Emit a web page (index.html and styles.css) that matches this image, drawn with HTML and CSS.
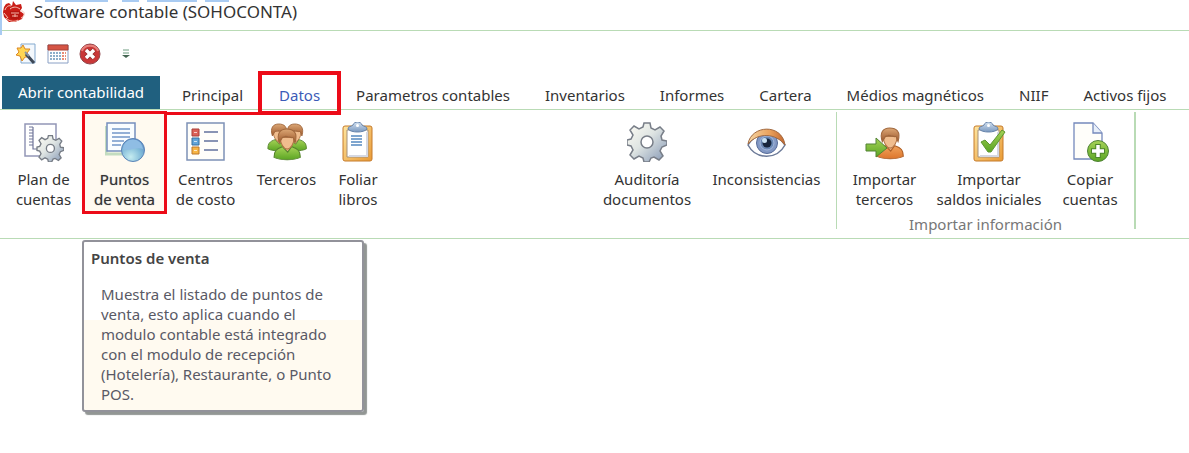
FILE: index.html
```html
<!DOCTYPE html>
<html lang="es">
<head>
  <meta charset="UTF-8">
  <meta name="viewport" content="width=device-width, initial-scale=1.0">
  <title>Software contable (SOHOCONTA)</title>
  <link rel="stylesheet" href="styles.css">
</head>
<body>

  <!-- degradados y formas compartidas por los iconos -->
  <svg class="defs" width="0" height="0" aria-hidden="true">
    <defs>
      <linearGradient id="metal" x1="0" y1="0" x2="1" y2="1">
        <stop offset="0" stop-color="#fffdf5"/><stop offset=".45" stop-color="#dfe5e3"/><stop offset="1" stop-color="#8295b3"/>
      </linearGradient>
      <linearGradient id="gold" x1="0" y1="0" x2="1" y2="1">
        <stop offset="0" stop-color="#ffe6a0"/><stop offset="1" stop-color="#e99a35"/>
      </linearGradient>
      <linearGradient id="green" x1="0" y1="0" x2="0" y2="1">
        <stop offset="0" stop-color="#a5d256"/><stop offset="1" stop-color="#5ba523"/>
      </linearGradient>
      <linearGradient id="orange" x1="0" y1="0" x2="0" y2="1">
        <stop offset="0" stop-color="#f0a35c"/><stop offset="1" stop-color="#dd762c"/>
      </linearGradient>
      <linearGradient id="hair" x1="0" y1="0" x2="0" y2="1">
        <stop offset="0" stop-color="#dca775"/><stop offset="1" stop-color="#9c562a"/>
      </linearGradient>
      <linearGradient id="clip" x1="0" y1="0" x2="0" y2="1">
        <stop offset="0" stop-color="#d4e2f1"/><stop offset="1" stop-color="#7998bf"/>
      </linearGradient>
      <linearGradient id="lid" x1="0" y1="0" x2="1" y2="0">
        <stop offset="0" stop-color="#f6d6a4"/><stop offset=".6" stop-color="#e9a05b"/><stop offset="1" stop-color="#c4672f"/>
      </linearGradient>
      <radialGradient id="ball" cx=".4" cy=".8" r=".8">
        <stop offset="0" stop-color="#c5ecf0"/><stop offset=".6" stop-color="#7fb9d8"/><stop offset="1" stop-color="#5f8fc6"/>
      </radialGradient>
      <path id="gear" d="M17 1h6l1 5 4 2 5-3 4 4-3 5 1 4 5 1v4l-5 2-2 4 3 5-4 4-5-3-3 1-2 4h-5l-1-4-4-2-5 3-4-4 3-5-2-4-4-1v-5l4-1 2-4-3-5 4-4 5 3 4-2zM20 14a6 6 0 1 0 0 12 6 6 0 0 0 0-12z"/>
      <g id="board">
        <rect x="5" y="4" width="29" height="35" rx="2" fill="url(#gold)" stroke="#c57a2b"/>
        <path d="M9 8h21v27H9z" fill="#fff" stroke="#a3917c"/>
        <path d="M29 10v24H11" fill="none" stroke="#d5d8e2" stroke-width="2"/>
        <path d="M10 7c0-3 3-2 5-4 1-4 8-4 9 0 2 2 5 1 5 4-3 4-16 4-19 0z" fill="url(#clip)" stroke="#6683aa"/>
        <circle cx="19.500" cy="3.500" r="1.500" fill="#fff"/>
      </g>
      <g id="person">
        <path d="M1 27c0-6 2-8 8-10h9c6 2 8 4 8 10-6 3-19 3-25 0z"/>
        <path d="M10 14h7v4l-3 4-4-4z" fill="#e9ae7d"/>
        <path d="M7 8c0 6 3 11 6.500 11S20 14 20 8z" fill="#f0bd8e" stroke="#b27446"/>
        <path d="M6 13C3 4 7 0 13 0s11 3 8 13l-2-5c-2 1-4-1-7-1L9 8z" fill="url(#hair)" stroke="#a0673c"/>
      </g>
    </defs>
  </svg>

  <header class="title-bar">
    <div class="window-edge" aria-hidden="true"><i class="edge-long"></i><i class="edge-short"></i><i class="edge-mid"></i><i class="edge-end"></i></div>
    <svg class="app-logo" viewBox="0 0 24 24" aria-hidden="true">
      <path d="M2 7l2-3 3-1 3 3 1-5 3 4 5-1 1 4-2 3 4 3-2 5-7 3H7l-5-5-1-5z" fill="#c91d16"/>
      <path d="M3 10c1-3 3-5 6-4M8 9c4-3 7-2 10 0M2 13l4 5M18 11c5-1 6 5 1 7M4 18c4 4 9 4 12 2" fill="none" stroke="#f6c5b8"/>
      <path d="M8 11h10v7c-3 2-7 2-10 0z" fill="#b71510"/>
      <path d="M9 13h3M14 13h3M10 16h6M13 12v5" stroke="#f3b4a7"/>
    </svg>
    <span class="app-title">Software contable (SOHOCONTA)</span>
  </header>

  <div class="quick-bar">
    <button class="quick" aria-label="Nuevo">
      <svg viewBox="0 0 22 22">
        <path d="M6 1h14v19H6z" fill="#f3f8fd" stroke="#83a9cf"/>
        <path d="M8 2l2 4 5 0-3 4 2 4-4 0-3 4-2-5-4-1 3-3-2-4 4 0z" fill="#ffd653" stroke="#dc8722"/>
        <path d="M11 11l8 9" stroke="#3d4857" stroke-width="3"/>
        <path d="M10 9l4 4" stroke="#8994a1" stroke-width="2"/>
      </svg>
    </button>
    <button class="quick" aria-label="Calendario">
      <svg viewBox="0 0 22 22">
        <path d="M1 2h20v18H1z" fill="#fff" stroke="#8aa0c5"/>
        <path d="M1 2h20v5H1z" fill="#d55445" stroke="#a94236"/>
        <path d="M3 10h16M3 13h16M3 16h16" stroke="#8dafca" stroke-width="2" stroke-dasharray="2 1"/>
        <path d="M15 10h4M15 13h4M15 16h4" stroke="#e78d78" stroke-width="2" stroke-dasharray="2 1"/>
      </svg>
    </button>
    <button class="quick" aria-label="Cerrar">
      <svg viewBox="0 0 22 22">
        <circle cx="11" cy="11" r="10" fill="#c93838" stroke="#91464b"/>
        <path d="M3 8c2-7 14-7 16 0" fill="none" stroke="#e8817b" stroke-width="2"/>
        <path d="M7 7l8 8M15 7l-8 8" stroke="#8c2828" stroke-width="5"/>
        <path d="M7 7l8 8M15 7l-8 8" stroke="#fff" stroke-width="3.500"/>
      </svg>
    </button>
    <button class="quick quick-more" aria-label="Personalizar">
      <svg viewBox="0 0 10 10"><path d="M2 1h6M2 4h6" stroke="#6f9d80"/><path d="M1 6h8L5 9z" fill="#466653"/></svg>
    </button>
  </div>

  <nav class="tabs">
    <button class="tab tab-file">Abrir contabilidad</button>
    <button class="tab tab-linked">Principal</button>
    <button class="tab tab-active">Datos</button>
    <button class="tab">Parametros contables</button>
    <button class="tab">Inventarios</button>
    <button class="tab">Informes</button>
    <button class="tab">Cartera</button>
    <button class="tab">Médios magnéticos</button>
    <button class="tab">NIIF</button>
    <button class="tab">Activos fijos</button>
  </nav>

  <main class="ribbon">
    <section class="group group-data">
      <button class="tool">
        <svg viewBox="0 0 40 40">
          <path d="M1 2h31v32H1z" fill="#fff" stroke="#9296b6" stroke-width="1.500"/>
          <path d="M9 5v22h4M5 5h4M5 8h4M5 11h4M5 14h4M5 17h4M5 20h4M5 23h4" fill="none" stroke="#70769a" stroke-width="1.200"/>
          <use href="#gear" transform="translate(13 13) scale(.67)" fill="url(#metal)" fill-rule="evenodd" stroke="#767c85" stroke-width="2"/>
        </svg>
        <span>Plan de<br>cuentas</span>
      </button>
      <button class="tool tool-marked" aria-describedby="tip">
        <svg viewBox="0 0 40 40">
          <path d="M1 4v28h20" fill="none" stroke="#c3dcc0" stroke-width="3"/>
          <path d="M2 1h28v28H2z" fill="#f9fdff" stroke="#758fbd" stroke-width="1.500"/>
          <path d="M7 7h18M7 11h18M7 15h18M7 19h12M7 23h9" stroke="#7197c9" stroke-width="1.500"/>
          <circle cx="28" cy="28" r="11.500" fill="url(#ball)" stroke="#5b83b7"/>
          <path d="M18 27c1-12 18-13 20 0-6-3-14 3-20 0z" fill="#8fbde4"/>
        </svg>
        <span>Puntos<br>de venta</span>
      </button>
      <button class="tool">
        <svg viewBox="0 0 40 40">
          <path d="M1 1h37v37H1z" fill="#fffefa" stroke="#7e91b7" stroke-width="1.500"/>
          <path d="M6 7h7v7H6z" fill="#dc6258" stroke="#a83f39"/>
          <path d="M6 16h7v7H6z" fill="#62a5d9" stroke="#376f9e"/>
          <path d="M6 25h7v7H6z" fill="#f7b544" stroke="#bb762b"/>
          <path d="M8 10.500h3M8 19.500h3M8 28.500h3" stroke="#fff" stroke-opacity=".7"/>
          <path d="M18 10h14M18 19h14M18 28h14" stroke="#63729d" stroke-width="1.500"/>
        </svg>
        <span>Centros<br>de costo</span>
      </button>
      <button class="tool">
        <svg viewBox="0 0 40 40">
          <use href="#person" transform="translate(0 2) scale(.9 .92)" fill="url(#green)" stroke="#55832d"/>
          <use href="#person" transform="translate(16 2) scale(.9 .92)" fill="url(#green)" stroke="#55832d"/>
          <use href="#person" transform="translate(6 7) scale(1.050)" fill="url(#green)" stroke="#55832d"/>
        </svg>
        <span>Terceros</span>
      </button>
      <button class="tool">
        <svg viewBox="0 0 40 40">
          <use href="#board"/>
          <path d="M13 14h11M13 17h11M13 20h11M13 23h11" stroke="#7fa6cf" stroke-width="2"/>
        </svg>
        <span>Foliar<br>libros</span>
      </button>
    </section>

    <section class="group group-audit">
      <button class="tool">
        <svg viewBox="0 0 40 40"><use href="#gear" fill="url(#metal)" fill-rule="evenodd" stroke="#787e88" stroke-width="1.500"/></svg>
        <span>Auditoría<br>documentos</span>
      </button>
      <button class="tool">
        <svg viewBox="0 0 40 40">
          <path d="M1 23C9 9 29 9 38 23 30 38 9 38 1 23z" fill="#fff" stroke="#6c7a98" stroke-width="1.500"/>
          <circle cx="20" cy="21" r="10.500" fill="#8298c4" stroke="#566b98"/>
          <circle cx="20" cy="21" r="7" fill="#6a88b4" stroke="#a5b9dc"/>
          <circle cx="20" cy="21" r="4.500" fill="#17263d"/>
          <circle cx="17.500" cy="18.500" r="2.500" fill="#c9e2f4"/>
          <path d="M1 22C4 3 35 1 38 23 29 11 11 10 1 22z" fill="url(#lid)" stroke="#a26b43"/>
        </svg>
        <span>Inconsistencias</span>
      </button>
    </section>

    <section class="group group-import">
      <div class="tools">
        <button class="tool">
          <svg viewBox="0 0 40 40">
            <use href="#person" transform="translate(11 6) scale(1.050)" fill="url(#orange)" stroke="#ad5f27"/>
            <path d="M1 22h10v-6l11 10-11 9v-6H1z" fill="url(#green)" stroke="#538334"/>
          </svg>
          <span>Importar<br>terceros</span>
        </button>
        <button class="tool">
          <svg viewBox="0 0 40 40">
            <use href="#board"/>
            <path d="M12 20l4-2 5 5L33 8l3 2-14 20h-3z" fill="url(#green)" stroke="#5d9730"/>
          </svg>
          <span>Importar<br>saldos iniciales</span>
        </button>
        <button class="tool">
          <svg viewBox="0 0 40 40">
            <path d="M4 1h19l9 10v26H4z" fill="#fffefa" stroke="#7589bc" stroke-width="1.300"/>
            <path d="M23 1v10h9" fill="#e8eff9" stroke="#7589bc" stroke-width="1.300"/>
            <circle cx="28" cy="29" r="10.500" fill="url(#green)" stroke="#508337"/>
            <path d="M28 22v14M21 29h14" stroke="#4d862b" stroke-width="5.500"/>
            <path d="M28 23v12M22 29h12" stroke="#fff" stroke-width="3.500"/>
          </svg>
          <span>Copiar<br>cuentas</span>
        </button>
      </div>
      <div class="group-name">Importar información</div>
    </section>
  </main>

  <div class="tooltip" id="tip" role="tooltip">
    <strong>Puntos de venta</strong>
    <p>Muestra el listado de puntos de<br>venta, esto aplica cuando el<br>modulo contable está integrado<br>con el modulo de recepción<br>(Hotelería), Restaurante, o Punto<br>POS.</p>
  </div>

</body>
</html>
```

FILE: styles.css
```css
* {
  box-sizing: border-box;
}

body {
  margin: 0;
  background: #fff;
  color: #333;
  font-family: "Noto Sans", "Open Sans", sans-serif;
  font-size: 15px;
  line-height: 20px;
}

button {
  margin: 0;
  padding: 0;
  border: 0;
  background: none;
  color: inherit;
  font: inherit;
  white-space: nowrap;
  cursor: pointer;
}

.defs {
  position: absolute;
}

/* barra de titulo */
.title-bar {
  position: relative;
  display: flex;
  align-items: center;
  gap: 8px;
  height: 31px;
  padding: 0 2px 6px;
  border-bottom: 1px solid #b9dbb5;
  font-size: 17px;
}

.app-logo {
  width: 24px;
  height: 24px;
}

.window-edge {
  position: absolute;
  top: 0;
  left: 0;
  display: flex;
  width: 230px;
  height: 35px;
  padding-left: 43px;
  border-left: 2px solid #a9cbf2;
}

.window-edge i {
  height: 2px;
  background: #a9cbf2;
}

.edge-long { width: 63px; }
.edge-short { width: 17px; margin-left: 14px; }
.edge-mid { width: 50px; margin-left: 8px; }
.edge-end { width: 24px; margin-left: 8px; }

/* acceso rapido */
.quick-bar {
  display: flex;
  align-items: center;
  gap: 10px;
  height: 45px;
  padding-left: 15px;
}

.quick {
  display: flex;
}

.quick svg {
  width: 22px;
  height: 22px;
}

.quick-more {
  margin-left: 10px;
}

.quick-more svg {
  width: 10px;
  height: 10px;
}

/* pestañas */
.tabs {
  display: flex;
  height: 34px;
  padding-left: 2px;
  border-bottom: 1px solid #b9dbb5;
}

.tab {
  position: relative;
  padding: 4px 17px 0 18px;
}

.tab-file {
  margin-right: 4px;
  padding: 0 16px 2px;
  background: #20607f;
  color: #fff;
}

.tab-linked::after {
  content: "";
  position: absolute;
  top: 36px;
  left: 0;
  right: 0;
  height: 3px;
  background: #ec0b18;
}

.tab-active {
  margin: 0 1px;
  color: #3c5bb8;
}

.tab-active::after {
  content: "";
  position: absolute;
  inset: -5px -4px -6px -3px;
  border: 4px solid #ec0b18;
}

/* cinta */
.ribbon {
  display: flex;
  height: 129px;
  padding-left: 5px;
  border-bottom: 1px solid #b9dbb5;
}

.group {
  display: grid;
  align-items: start;
}

.group-data {
  grid-template-columns: 77px 85px 77px 85px 58px;
}

.group-audit {
  grid-template-columns: 112px 127px;
  margin-left: 204px;
}

.group-import {
  margin: 2px 0 9px 6px;
  border-left: 1px solid #b9dbb5;
  border-right: 2px solid #b9dbb5;
}

.tools {
  display: grid;
  grid-template-columns: 95px 114px 88px;
}

.tool {
  display: flex;
  flex-direction: column;
  align-items: center;
  height: 104px;
  padding-top: 12px;
}

.tool svg {
  width: 40px;
  height: 40px;
  margin-bottom: 7px;
}

.tool-marked {
  height: 103px;
  margin-top: 1px;
  padding-top: 8px;
  border: 3px solid #ec0b18;
  background: #fffaf0;
  text-shadow: 0 0 1px #8a8a9a;
}

.group-import .tool {
  height: 102px;
  padding-top: 10px;
}

.group-name {
  color: #777;
  text-align: center;
}

/* ayuda emergente */
.tooltip {
  position: absolute;
  top: 240px;
  left: 82px;
  width: 282px;
  padding: 6px 7px;
  border: 2px solid #92929a;
  border-radius: 3px;
  background: linear-gradient(#fff 78px, #fffaf0 78px);
  box-shadow: 3px 3px 1px #929694;
  color: #595965;
}

.tooltip strong {
  color: #444;
  font-weight: 600;
}

.tooltip p {
  margin: 16px 0 0 10px;
  white-space: nowrap;
}
```
